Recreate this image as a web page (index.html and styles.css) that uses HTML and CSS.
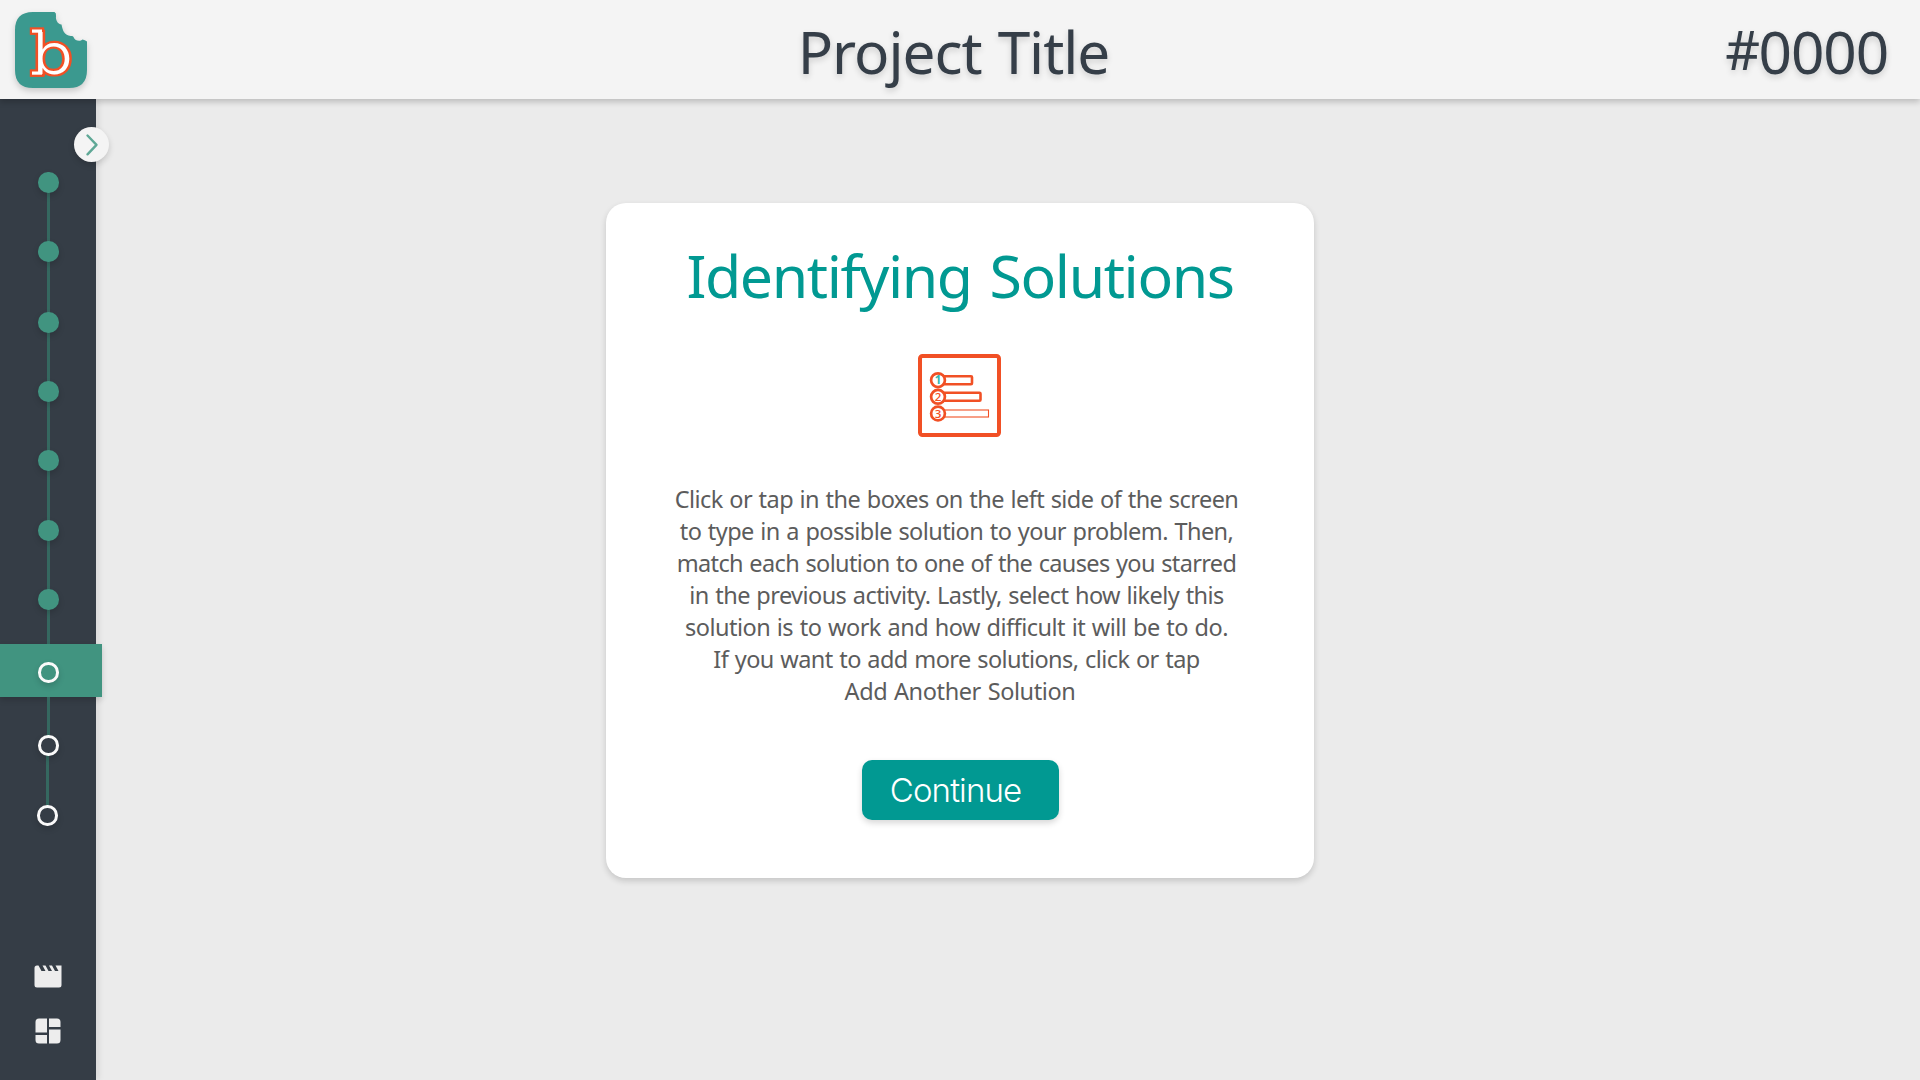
FILE: index.html
```html
<!DOCTYPE html>
<html lang="en">
<head>
<meta charset="utf-8">
<title>Identifying Solutions</title>
<link rel="stylesheet" href="styles.css">
</head>
<body>
<header class="topbar">
  <svg class="logo" width="72" height="76" viewBox="0 0 72 76">
    <path fill="#3b998f" d="M18 0H39.500Q41.500 1 41 4C40.500 8 42.500 12 46.500 12.500C47.500 17 48.500 22 53.500 23.500C56 24.500 57.500 23 58.500 25C60 29 65 30 67.500 27.500Q70 28 72 29.500V58Q72 76 54 76H18Q0 76 0 58V18Q0 0 18 0Z"/>
    <g class="logo-edge"><text transform="translate(17.500 61.500) scale(1.180 1)">b</text><rect x="17" y="17.500" width="10" height="3.200"/><rect x="17" y="59.500" width="10" height="3.200"/></g>
    <g class="logo-face"><text transform="translate(17.500 61.500) scale(1.180 1)">b</text><rect x="17" y="17.500" width="10" height="3.200"/><rect x="17" y="59.500" width="10" height="3.200"/></g>
  </svg>
  <h1 class="project">Project Title</h1>
  <div class="code"><span class="hash">#</span>0000</div>
</header>
<div class="workspace">
  <aside class="sidebar">
    <button class="expand" aria-label="Expand"><svg width="35" height="35" viewBox="0 0 35 35"><path d="M13.500 8.500L22.500 17.800L13.500 27.300" fill="none" stroke="#5fa896" stroke-width="2.400" stroke-linecap="round" stroke-linejoin="round"/></svg></button>
    <ol class="steps">
      <li class="step done"><i class="dot"></i></li>
      <li class="step done long"><i class="dot"></i></li>
      <li class="step done"><i class="dot"></i></li>
      <li class="step done"><i class="dot"></i></li>
      <li class="step done mid"><i class="dot"></i></li>
      <li class="step done"><i class="dot"></i></li>
      <li class="step done before"><i class="dot"></i></li>
      <li class="step current"><i class="dot"></i></li>
      <li class="step after"></li>
      <li class="step todo"><i class="dot"></i></li>
      <li class="step last"><i class="dot"></i></li>
    </ol>
    <div class="tools">
      <svg width="28" height="23" viewBox="0 0 28 23"><path fill="#ededed" d="M3 .5H4.500L7.500 6H11.500L8.500 .5H11.500L14.500 6H18L15 .5H18L21 6H24.500L21.500 .5H27.500V20Q27.500 22.500 25 22.500H3Q.5 22.500 .5 20V3Q.5 .5 3 .5Z"/></svg>
      <svg width="26" height="26" viewBox="0 0 26 26"><path fill="#ededed" d="M4 .5H12V14.500H.5V4Q.5 .5 4 .5ZM14 .5H22Q25.500 .5 25.500 4V9H14ZM.5 17H12V25.500H4Q.5 25.500 .5 22ZM14 11.500H25.500V22Q25.500 25.500 22 25.500H14Z"/></svg>
    </div>
  </aside>
  <main class="stage">
    <section class="card">
      <h2 class="heading">Identifying Solutions</h2>
      <svg class="list-icon" width="84" height="84" viewBox="0 0 84 84" fill="#fff" stroke="#f15025">
        <rect x="2" y="2" width="79" height="79" rx="2.500" stroke-width="4"/>
        <rect x="22" y="22.200" width="32" height="8" rx="1" stroke-width="2.600"/>
        <rect x="22" y="38.800" width="40.500" height="8" rx="1" stroke-width="2.600"/>
        <rect x="22" y="56" width="48.500" height="7" stroke-width="1.100"/>
        <circle cx="20" cy="26.200" r="6.900" stroke-width="2.700"/>
        <circle cx="20" cy="42.800" r="6.900" stroke-width="2.700"/>
        <circle cx="20" cy="59.500" r="6.900" stroke-width="2.700"/>
        <g class="nums"><text class="first" x="20" y="30.200">1</text><text x="20" y="46.800">2</text><text x="20" y="63.500">3</text></g>
      </svg>
      <p class="copy">
        <span class="l1">Click or tap in the boxes on the left side of the screen</span>
        <span class="l2">to type in a possible solution to your problem. Then,</span>
        <span class="l3">match each solution to one of the causes you starred</span>
        <span class="l4">in the previous activity. Lastly, select how likely this</span>
        <span class="l5">solution is to work and how difficult it will be to do.</span>
        <span class="l6">If you want to add more solutions, click or tap</span>
        <span class="l7">Add Another Solution</span>
      </p>
      <button class="continue">Continue</button>
    </section>
  </main>
</div>
</body>
</html>
```
FILE: styles.css
```css
* { box-sizing: border-box; }
body {
  margin: 0;
  width: 1920px;
  height: 1080px;
  overflow: hidden;
  display: flex;
  flex-direction: column;
  background: #ebebeb;
  font-family: "Noto Sans", "Open Sans", sans-serif;
}
h1, h2, p, ol { margin: 0; padding: 0; font-weight: 400; }
button { border: 0; padding: 0; font: inherit; }

.topbar {
  position: relative;
  z-index: 2;
  flex: none;
  height: 99px;
  display: grid;
  grid-template-columns: 1fr auto 1fr;
  padding: 0 32px 0 15px;
  background: #f4f4f4;
  box-shadow: 0 3px 6px rgba(0, 0, 0, .2);
  color: #353e48;
  font-size: 58.500px;
  line-height: 80px;
  text-shadow: 0 3px 6px rgba(0, 0, 0, .16);
}
.logo { margin-top: 12px; overflow: visible; filter: drop-shadow(0 3px 3px rgba(0, 0, 0, .18)); }
.logo text { font-family: "Inter", sans-serif; font-size: 57px; font-weight: 300; text-shadow: none; }
.logo-edge { fill: #f15025; stroke: #f15025; stroke-width: 4.400; }
.logo-face { fill: #fff; }
.project { font-size: inherit; padding: 11px 0 0 4px; letter-spacing: -1.050px; word-spacing: 2px; }
.code { text-align: right; padding-top: 11px; letter-spacing: -1.100px; }
.hash { font-size: 54px; line-height: 0; vertical-align: 4px; letter-spacing: -1.500px; }

.workspace { flex: 1; display: flex; }
.sidebar {
  position: relative;
  z-index: 1;
  flex: none;
  width: 96px;
  display: flex;
  flex-direction: column;
  justify-content: space-between;
  padding: 73px 0 36px;
  background: #353d46;
  box-shadow: 3px 0 6px rgba(0, 0, 0, .08);
}
.expand {
  position: absolute;
  left: 74px;
  top: 28px;
  width: 35px;
  height: 35px;
  border-radius: 50%;
  background: #f4f4f4;
  box-shadow: 0 3px 6px rgba(0, 0, 0, .16);
}
.expand svg { display: block; }

.steps { list-style: none; }
.step {
  position: relative;
  height: 69px;
  padding-left: 38px;
  background: linear-gradient(#356860, #356860) 47px 0 / 3px 100% no-repeat;
}
.long { height: 71px; }
.mid { height: 70px; }
.before { height: 55px; }
.after { height: 38px; }
.dot {
  display: block;
  width: 20.500px;
  height: 20.500px;
  border-radius: 50%;
  background: #419480;
  box-shadow: 0 3px 6px rgba(0, 0, 0, .16);
}
.current .dot, .todo .dot, .last .dot { border: 3px solid #fafafa; background: #353d46; }
.current {
  width: 102px;
  height: 53px;
  padding-top: 18px;
  background: #419480;
  box-shadow: 0 3px 6px rgba(0, 0, 0, .16);
}
.current .dot { background: #419480; }
.todo { height: 70px; background-position: 46px 0; }
.last { height: 21px; padding-left: 37px; background: none; }

.tools { display: flex; flex-direction: column; gap: 30px; padding-left: 34px; }
.tools svg + svg { margin-left: 1px; }

.stage { flex: 1; padding: 104px 0 0 510px; }
.card {
  width: 708px;
  height: 675px;
  display: flex;
  flex-direction: column;
  align-items: center;
  padding-top: 32px;
  border-radius: 20px;
  background: #fff;
  box-shadow: 0 3px 6px rgba(0, 0, 0, .16);
}
.heading { color: #019992; font-size: 59px; line-height: 80px; letter-spacing: -1.420px; word-spacing: 4px; }
.list-icon { margin-top: 39px; }
.nums { stroke: none; fill: #f15025; font: 600 11.500px "Open Sans", sans-serif; text-anchor: middle; }
.nums .first { fill: #35b5ad; font-weight: 700; }
.copy { margin-top: 45px; color: #5c5c5c; font-size: 23.500px; line-height: 32px; word-spacing: 1px; }
.copy span { display: block; text-align: center; padding-right: 7px; white-space: nowrap; }
.copy .l1 { letter-spacing: -.560px; }
.copy .l2 { letter-spacing: -.570px; }
.copy .l3 { letter-spacing: -.650px; }
.copy .l4 { letter-spacing: -.570px; }
.copy .l5 { letter-spacing: -.510px; }
.copy .l6 { letter-spacing: -.570px; }
.copy .l7 { letter-spacing: -.400px; padding-right: 0; }
.continue {
  width: 197px;
  height: 60px;
  margin-top: 53px;
  padding: 0 9px 0 0;
  border-radius: 10px;
  background: #019992;
  color: #fff;
  font: 300 33px "Inter", "Liberation Sans", sans-serif;
  letter-spacing: -.900px;
  box-shadow: 0 3px 6px rgba(0, 0, 0, .16);
}
```
